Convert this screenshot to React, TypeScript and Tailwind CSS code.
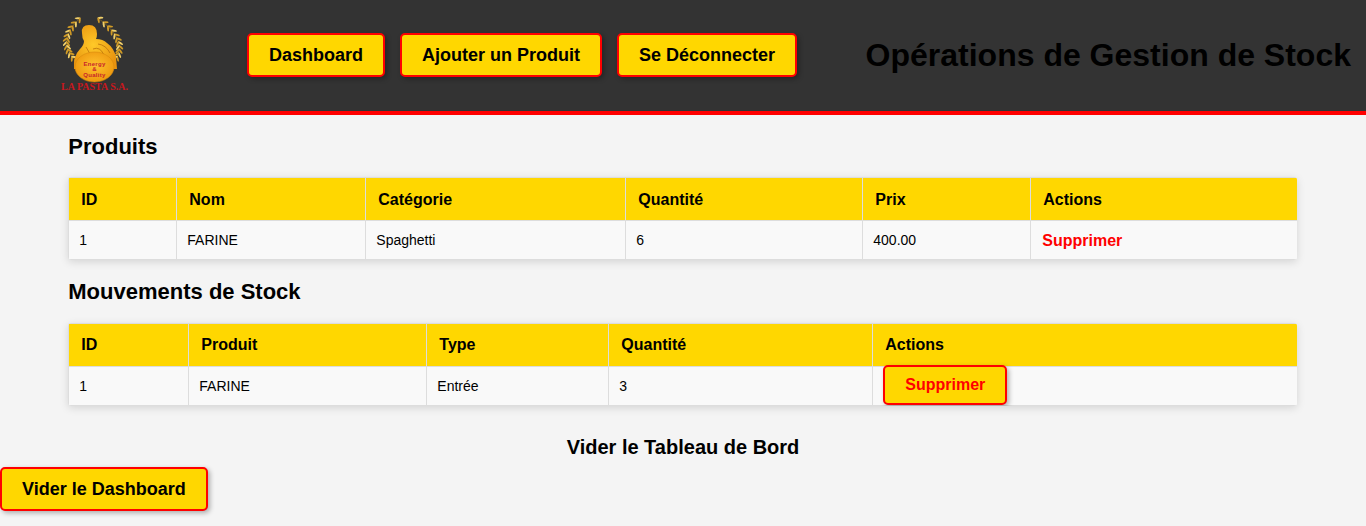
const btn = "rounded-[5px] border-2 border-[#ff0000] bg-[#ffd700] px-5 py-[9.75px] text-[18px] leading-[20px] font-bold text-black shadow-[2px_2px_5px_rgba(0,0,0,0.3)]";
const th = "border border-[#dddddd] bg-[#ffd700] px-[12px] h-[43px] text-left text-[16px] font-bold text-black";
const td = "border border-[#dddddd] bg-[#f9f9f9] h-[39px] text-left";
const tdText = "px-[10px] text-[14px] text-black";
const h2 = "text-[22px] leading-[25px] font-bold text-black";

type P = [number, number];
function wreath(a: P, c: P, b: P, side: number) {
  const out: { x: number; y: number; r: number }[] = [];
  for (let i = 0; i <= 11; i++) {
    const t = i / 11;
    const x = (1 - t) * (1 - t) * a[0] + 2 * (1 - t) * t * c[0] + t * t * b[0];
    const y = (1 - t) * (1 - t) * a[1] + 2 * (1 - t) * t * c[1] + t * t * b[1];
    const dx = 2 * (1 - t) * (c[0] - a[0]) + 2 * t * (b[0] - c[0]);
    const dy = 2 * (1 - t) * (c[1] - a[1]) + 2 * t * (b[1] - c[1]);
    const ang = (Math.atan2(dy, dx) * 180) / Math.PI;
    out.push({ x, y, r: ang + side * 40 }, { x, y, r: ang - side * 40 });
  }
  return out;
}

function Logo() {
  const left = wreath([24, 3], [0, 26], [19, 45], 1);
  const right = wreath([42, 3], [73, 26], [59, 45], -1);
  return (
    <svg width="76" height="80" viewBox="0 0 76 80" className="block overflow-visible">
      <defs>
        <radialGradient id="body" cx="45%" cy="45%" r="60%">
          <stop offset="0%" stopColor="#ffc928" />
          <stop offset="100%" stopColor="#e8930f" />
        </radialGradient>
        <radialGradient id="egg" cx="50%" cy="45%" r="55%">
          <stop offset="0%" stopColor="#ffc22e" />
          <stop offset="100%" stopColor="#ee980e" />
        </radialGradient>
      </defs>
      <path d="M24 3 Q0 26 19 45 M42 3 Q73 26 59 45" stroke="#a87c18" strokeWidth="0.6" fill="none" />
      {[...left, ...right].map((l, i) => (
        <ellipse key={i} cx={l.x} cy={l.y} rx="3" ry="1" fill={i % 3 === 0 ? "#f0cf6a" : "#cf9a26"} transform={`rotate(${l.r} ${l.x} ${l.y}) translate(2.4 0)`} />
      ))}
      <path d="M26 18 Q25 10 33 10 Q41 10 41 19 Q41 22 40 24 Q47 24 51 28 Q58 33 60 42 L61 54 L18 54 Q17 41 24 34 Q28 30 28 26 Q26 23 26 18 Z" fill="url(#body)" />
      <path d="M42 29 Q50 30 54 38 M37 34 Q44 31 48 40 Q45 44 41 40 M30 32 Q35 38 34 44" stroke="#b8700a" strokeWidth="0.8" fill="none" />
      <ellipse cx="38.5" cy="52" rx="19.5" ry="15" fill="url(#egg)" stroke="#d98a0c" strokeWidth="0.6" />
      <g fontFamily="Liberation Sans, sans-serif" fontSize="6" fontWeight="700" letterSpacing="0.3" fill="#c8242a" textAnchor="middle">
        <text x="38.5" y="50.5">Energy</text>
        <text x="38.5" y="56">&amp;</text>
        <text x="38.5" y="61.5">Quality</text>
      </g>
      <text x="38.5" y="75" textAnchor="middle" fontSize="10" fontWeight="700" fill="#c8181e" fontFamily="Liberation Serif, serif">LA PASTA S.A.</text>
    </svg>
  );
}

function Table({ cols, heads, headClass, children }: { cols: number[]; heads: string[]; headClass?: string; children: React.ReactNode }) {
  return (
    <div className="w-[1229px] ml-[68.3px] rounded-[3px] overflow-hidden shadow-[0_2px_8px_rgba(0,0,0,0.13)]">
      <table className="w-full table-fixed border-collapse">
        <colgroup>
          {cols.map((c, i) => <col key={i} style={{ width: c }} />)}
        </colgroup>
        <thead>
          <tr>{heads.map((h) => <th key={h} className={`${th} ${headClass ?? ""}`}>{h}</th>)}</tr>
        </thead>
        <tbody>{children}</tbody>
      </table>
    </div>
  );
}

export default function App() {
  return (
    <div className="h-[526px] overflow-hidden bg-[#f4f4f4] font-['Liberation_Sans',Arial,sans-serif]">
      <header className="flex h-[115px] items-center border-b-4 border-[#ff0000] bg-[#333333]">
        <div className="ml-[56px] mb-[1px] h-[80px] w-[76px]"><Logo /></div>
        <nav className="ml-[115px] mb-[1px] flex gap-[15px]">
          <button className={btn}>Dashboard</button>
          <button className={btn}>Ajouter un Produit</button>
          <button className={btn}>Se Déconnecter</button>
        </nav>
        <h1 className="ml-auto mr-[15px] text-[32px] leading-[37px] font-bold text-black">Opérations de Gestion de Stock</h1>
      </header>

      <h2 className={`${h2} ml-[68.3px] mt-[19px] mb-[18px]`}>Produits</h2>
      <Table headClass="pt-[2px]" cols={[108, 189, 260, 237, 168, 268]} heads={["ID", "Nom", "Catégorie", "Quantité", "Prix", "Actions"]}>
        <tr>
          <td className={`${td} ${tdText}`}>1</td>
          <td className={`${td} ${tdText}`}>FARINE</td>
          <td className={`${td} ${tdText}`}>Spaghetti</td>
          <td className={`${td} ${tdText}`}>6</td>
          <td className={`${td} ${tdText}`}>400.00</td>
          <td className={`${td} px-[11px] pt-px text-[16px] font-bold text-[#ff0000]`}>Supprimer</td>
        </tr>
      </Table>

      <h2 className={`${h2} ml-[68.3px] mt-[19px] mb-[19px]`}>Mouvements de Stock</h2>
      <Table cols={[120, 238, 182, 264, 426]} heads={["ID", "Produit", "Type", "Quantité", "Actions"]}>
        <tr>
          <td className={`${td} ${tdText}`}>1</td>
          <td className={`${td} ${tdText}`}>FARINE</td>
          <td className={`${td} ${tdText}`}>Entrée</td>
          <td className={`${td} ${tdText}`}>3</td>
          <td className={`${td} px-[10px] py-0`}>
            <button className="relative z-10 -mt-[2px] block h-[40px] w-[124px] rounded-[5px] border-2 border-[#ff0000] bg-[#ffd700] text-[16px] font-bold text-[#ff0000] shadow-[2px_2px_5px_rgba(0,0,0,0.3)]">Supprimer</button>
          </td>
        </tr>
      </Table>

      <h3 className="mt-[30px] text-center text-[20px] leading-[23px] font-bold text-black">Vider le Tableau de Bord</h3>
      <button className={`${btn} mt-[8px] block`}>Vider le Dashboard</button>
    </div>
  );
}
